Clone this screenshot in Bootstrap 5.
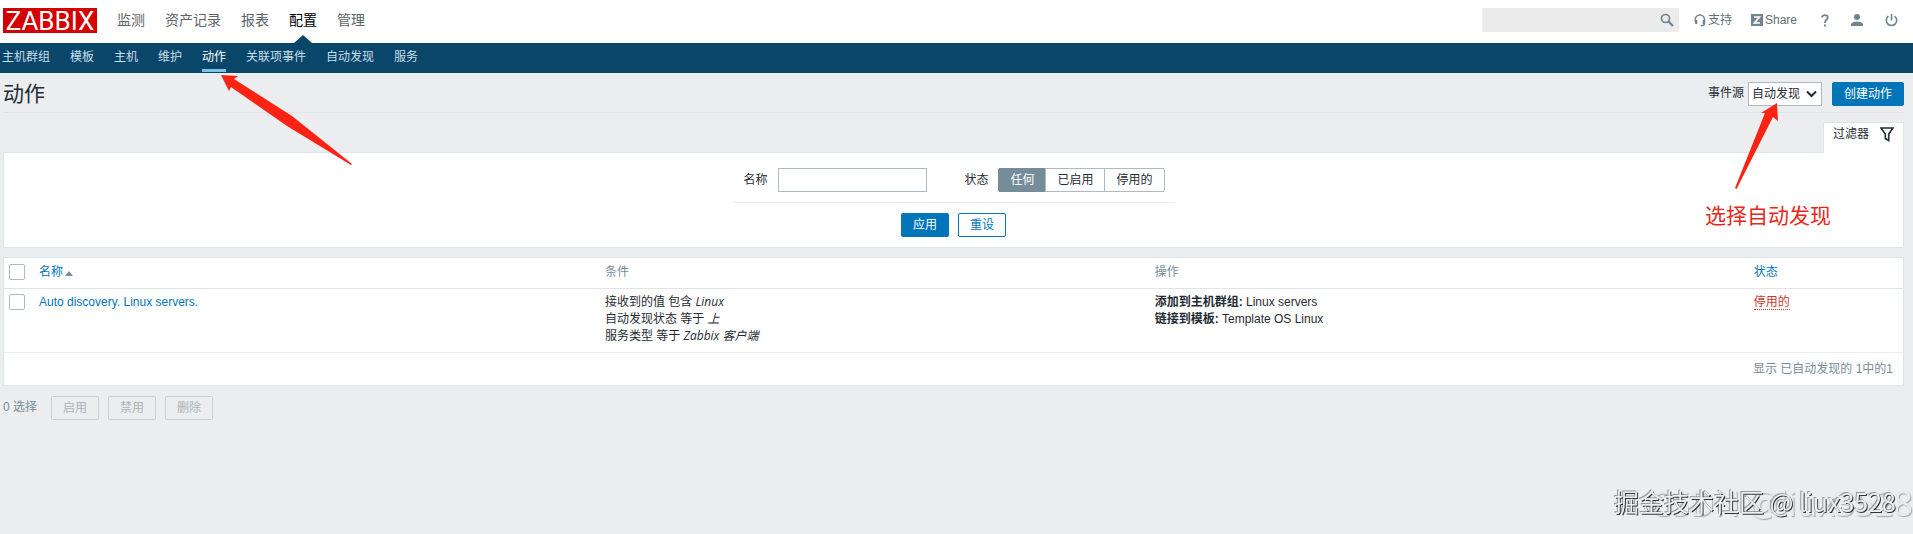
<!DOCTYPE html>
<html lang="zh-CN">
<head>
<meta charset="utf-8">
<meta name="viewport" content="width=device-width, initial-scale=1">
<title>动作</title>
<link href="https://cdn.jsdelivr.net/npm/bootstrap@5.3.0/dist/css/bootstrap.min.css" rel="stylesheet">
<script src="https://cdn.jsdelivr.net/npm/bootstrap@5.3.0/dist/js/bootstrap.bundle.min.js"></script>
<style>
:root { --zbx-blue: #0275b8; --zbx-navy: #0a466a; --zbx-grey: #768d99; --zbx-line: #dfe4e7; }
body { background: #ebedef; color: #1f2c33; font: 12px/17px "Liberation Sans", "Noto Sans CJK SC", sans-serif; }
a { color: var(--zbx-blue); text-decoration: none; }
.topbar { min-height: 43px; padding: 0 15px 0 3px; }
.brand { background: #d40000; color: #fff; font: 26px/26px Roboto, sans-serif; width: 94px; height: 25px; text-align: center; margin: 0 20px 2px 0; }
.main-menu { gap: 20px; }
.main-menu a { position: relative; color: #5b6468; font-size: 14px; line-height: 40px; height: 43px; }
.main-menu a.active { color: #000; }
.main-menu a.active::after { content: ""; position: absolute; left: 50%; bottom: 0; margin-left: -9px; border: 9px solid transparent; border-top: 0; border-bottom: 8px solid var(--zbx-navy); }
.sub-menu { background: var(--zbx-navy); height: 30px; padding-left: 2px; gap: 20px; }
.sub-menu a { position: relative; color: #c6dfec; line-height: 28px; height: 29px; }
.sub-menu a.active { color: #fff; border-bottom: 3px solid #7cc3ec; }
.search-box { background: #ebebeb; width: 197px; height: 24px; padding-right: 5px; margin-right: 15px; }
.search-box input { background: transparent; border: 0; outline: 0; min-width: 0; }
.tools { padding-bottom: 3px; }
.tools a { color: #5f6f78; height: 24px; gap: 2px; margin-left: 22px; }
.tools a.support { margin: 0 -3px 0 0; }
.tools svg, .search-box svg { color: #70838e; }
.page { padding: 0 9px 0 3px; }
.title-bar { height: 40px; border-bottom: 1px solid var(--zbx-line); }
.title-bar h1 { font-size: 21px; line-height: 26px; }
.title-tools { padding-top: 2px; }
.title-tools .ctl { margin-left: 10px; }
.ctl { height: 24px; font-size: 12px; line-height: 18px; padding: 2px 11px; border-radius: 2px; border: 1px solid var(--zbx-blue); }
.ctl-fill { background: var(--zbx-blue); color: #fff; }
.ctl-line { background: #fff; color: var(--zbx-blue); }
.ctl:disabled { background: transparent; border-color: #cdd1d4; color: #acb4b9; }
.btn-gap { gap: 9px; }
.source-select { width: 74px; height: 24px; border: 1px solid #acbbc2; border-radius: 0; padding: 0 0 0 3px; background: #fff; color: #1f2c33; appearance: none; line-height: 20px; }
.chev { position: absolute; right: 5px; top: 8px; pointer-events: none; }
.filter-tab { width: 81px; height: 31px; margin: 9px 0 -1px; padding: 0 9px 7px 9px; background: #fff; border: 1px solid var(--zbx-line); border-bottom: 0; color: #1f2c33; position: relative; }
.panel { background: #fff; border: 1px solid var(--zbx-line); }
.filter-panel { padding: 15px 0 10px; }
.filter-fields { width: 442px; padding: 0 10px 10px 11px; border-bottom: 1px solid #ebeef0; }
.filter-actions { padding-top: 10px; }
.name-input { width: 149px; height: 24px; border: 1px solid #acbbc2; outline: 0; }
.field-label { margin-right: 10px; }
.seg label { height: 24px; line-height: 22px; padding: 0 11px; border: 1px solid #acbbc2; margin-left: -1px; background: #fff; }
.seg label:first-of-type { border-radius: 2px 0 0 2px; margin-left: 0; }
.seg label:last-of-type { border-radius: 0 2px 2px 0; }
.seg input:checked + label { background: var(--zbx-grey); border-color: var(--zbx-grey); color: #fff; }
.list-panel { margin-top: 9px; }
.list { table-layout: fixed; }
.list th { font-weight: 400; color: var(--zbx-grey); border-bottom: 1px solid var(--zbx-line); height: 30px; padding: 5px 5px 6px; }
.list th input { margin-bottom: 1px; }
.list thead tr { line-height: 16px; }
.list td { vertical-align: top; padding: 5px 5px 5px; height: 64px; border-bottom: 1px solid #ebeef0; }
.list input { appearance: none; display: block; width: 16px; height: 16px; border: 1px solid #acbbc2; border-radius: 2px; background: #fff; margin: 0; }
.list em { font-family: "Open Sans", "Noto Sans CJK SC", sans-serif; line-height: 16px; }
.list .sort { display: inline-block; border: 4px solid transparent; border-top: 0; border-bottom: 5px solid var(--zbx-grey); margin-left: 2px; }
.list .off { color: #c4382f; border-bottom: 1px dotted #c4382f; }
.summary { color: var(--zbx-grey); padding: 0 10px; line-height: 32px; }
.bulk { margin-top: 10px; gap: 14px; }
.bulk span { color: var(--zbx-grey); }
.arrow-left { position: absolute; left: 19px; top: 31px; z-index: 3; }
.arrow-right { position: absolute; right: 43px; top: 21px; z-index: 3; }
.note { position: absolute; right: -9px; top: 119px; z-index: 3; color: #e5281b; font-size: 21px; line-height: 30px; }
.stamp { position: fixed; white-space: nowrap; pointer-events: none; }
.stamp-front { right: 17px; bottom: 15px; font: 25px/36px "Noto Sans CJK SC", sans-serif; color: #eceef0; text-shadow: 1px 1px 0 #333, -1px -1px 0 #999; }
.stamp-back { right: 0; bottom: 9px; font: 34px/44px "Open Sans", sans-serif; color: #e8eaec; text-shadow: 1px 1px 1px #a5a7a9; }
</style>
</head>
<body>
<header class="bg-white">
  <div class="topbar d-flex align-items-center justify-content-between">
    <div class="d-flex align-items-center">
      <span class="brand">ZABBIX</span>
      <nav class="main-menu d-flex" aria-label="主菜单">
        <a href="#">监测</a><a href="#">资产记录</a><a href="#">报表</a><a href="#" class="active">配置</a><a href="#">管理</a>
      </nav>
    </div>
    <div class="tools d-flex align-items-center">
      <div class="search-box d-flex align-items-center">
        <input type="text" class="flex-grow-1" aria-label="搜索">
        <svg width="14" height="14" viewBox="0 0 14 14" fill="none" stroke="currentColor"><circle cx="5.5" cy="5.5" r="4" stroke-width="1.7"/><path d="M8.5 8.5L13 13" stroke-width="2.2"/></svg>
      </div>
      <a href="#" class="support d-flex align-items-center"><svg width="12" height="13" viewBox="0 0 12 13" fill="none" stroke="currentColor"><path d="M1.300 8V5.500a4.500 4.500 0 0 1 9.200 0V9q0 2.800-3.500 2.800" stroke-width="1.500"/><path d="M2.200 6v4M9.800 6v4" stroke-width="2.200"/></svg>支持</a>
      <a href="#" class="d-flex align-items-center"><svg width="12" height="12" viewBox="0 0 12 12"><path fill="currentColor" d="M0 0h12v12H0z"/><path d="M3 3h5.500L3.500 9H9" fill="none" stroke="#fff" stroke-width="1.700"/></svg>Share</a>
      <a href="#" class="d-flex align-items-center ms-4" aria-label="帮助"><svg width="8" height="13" viewBox="0 0 8 13" fill="none" stroke="currentColor" stroke-width="1.800"><path d="M1 3.500C1 .3 6.800.3 6.800 3.600 6.800 5.800 3.900 5.800 3.900 9"/><path d="M3.900 10.500v2"/></svg></a>
      <a href="#" class="d-flex align-items-center" aria-label="用户"><svg width="12" height="12" viewBox="0 0 12 12" fill="currentColor"><circle cx="6" cy="3" r="3"/><path d="M0 12V9.800Q2 7.500 6 7.500t6 2.300V12z"/></svg></a>
      <a href="#" class="d-flex align-items-center" aria-label="退出"><svg width="13" height="13" viewBox="0 0 13 13" fill="none" stroke="currentColor" stroke-width="1.600"><path d="M6.500 0v6.500M3.400 2.200a5.200 5.200 0 1 0 6.200 0"/></svg></a>
    </div>
  </div>
  <nav class="sub-menu d-flex" aria-label="配置">
    <a href="#">主机群组</a><a href="#">模板</a><a href="#">主机</a><a href="#">维护</a>
    <a href="#" class="active">动作<svg class="arrow-left" width="133" height="93" viewBox="0 0 133 93" fill="#fb2314"><path d="M0 1L17 2 13 5 71 42 131 90 130 91 66 52 10 13 8 17z"/></svg></a>
    <a href="#">关联项事件</a><a href="#">自动发现</a><a href="#">服务</a>
  </nav>
</header>

<main class="page">
  <div class="title-bar d-flex justify-content-between">
    <h1 class="m-0 pt-2 fw-normal">动作</h1>
    <div class="title-tools d-flex align-items-center">
      <label for="source" class="me-1">事件源</label>
      <div class="position-relative">
        <select id="source" class="source-select d-block"><option>自动发现</option><option>触发器</option></select>
        <svg class="chev" width="11" height="8" viewBox="0 0 11 8" fill="none" stroke="#1f2c33" stroke-width="2"><path d="M1 1.500l4.500 4.500L10 1.500"/></svg>
        <svg class="arrow-right" width="44" height="88" viewBox="0 0 44 88" fill="#fb2314"><path d="M42 0L43 18 38 14 1.500 86 0 85 30 10 26 10z"/></svg>
        <div class="note text-nowrap">选择自动发现</div>
      </div>
      <button type="button" class="ctl ctl-fill">创建动作</button>
    </div>
  </div>

  <div class="d-flex justify-content-end">
    <a href="#filter" class="filter-tab d-flex align-items-center justify-content-between">过滤器
      <svg width="14" height="15" viewBox="0 0 14 15" fill="none" stroke="#1f2c33" stroke-width="1.600"><path d="M1 1h12L8.700 7v6.500L5.300 11.500V7z"/></svg></a>
  </div>
  <form id="filter" class="panel filter-panel">
    <div class="filter-fields d-flex align-items-center justify-content-between mx-auto">
      <div class="d-flex align-items-center"><label for="name" class="field-label">名称</label><input id="name" type="text" class="name-input"></div>
      <div class="d-flex align-items-center">
        <span class="field-label">状态</span>
        <div class="seg d-flex" role="group" aria-label="状态">
          <input class="btn-check" type="radio" name="st" id="s1" checked><label for="s1">任何</label>
          <input class="btn-check" type="radio" name="st" id="s2"><label for="s2">已启用</label>
          <input class="btn-check" type="radio" name="st" id="s3"><label for="s3">停用的</label>
        </div>
      </div>
    </div>
    <div class="filter-actions btn-gap d-flex justify-content-center">
      <button type="button" class="ctl ctl-fill">应用</button>
      <button type="button" class="ctl ctl-line">重设</button>
    </div>
  </form>

  <div class="panel list-panel">
    <table class="list w-100">
      <colgroup><col style="width:30px"><col style="width:29.8%"><col style="width:28.95%"><col style="width:31.55%"><col></colgroup>
      <thead><tr>
        <th><input type="checkbox" aria-label="全选"></th>
        <th><a href="#">名称<span class="sort"></span></a></th><th>条件</th><th>操作</th><th><a href="#">状态</a></th>
      </tr></thead>
      <tbody><tr>
        <td><input type="checkbox" aria-label="Auto discovery. Linux servers."></td>
        <td><a href="#">Auto discovery. Linux servers.</a></td>
        <td>接收到的值 包含 <em>Linux</em><br>自动发现状态 等于 <em>上</em><br>服务类型 等于 <em>Zabbix 客户端</em></td>
        <td><b>添加到主机群组:</b> Linux servers<br><b>链接到模板:</b> Template OS Linux</td>
        <td><a href="#" class="off">停用的</a></td>
      </tr></tbody>
    </table>
    <div class="summary text-end">显示 已自动发现的 1中的1</div>
  </div>

  <div class="bulk d-flex align-items-center">
    <span>0 选择</span>
    <div class="btn-gap d-flex">
      <button type="button" class="ctl" disabled>启用</button>
      <button type="button" class="ctl" disabled>禁用</button>
      <button type="button" class="ctl" disabled>删除</button>
    </div>
  </div>
</main>
<div class="stamp stamp-back">CSDN @liux3528</div>
<div class="stamp stamp-front">掘金技术社区 @ liux3528</div>
</body>
</html>
